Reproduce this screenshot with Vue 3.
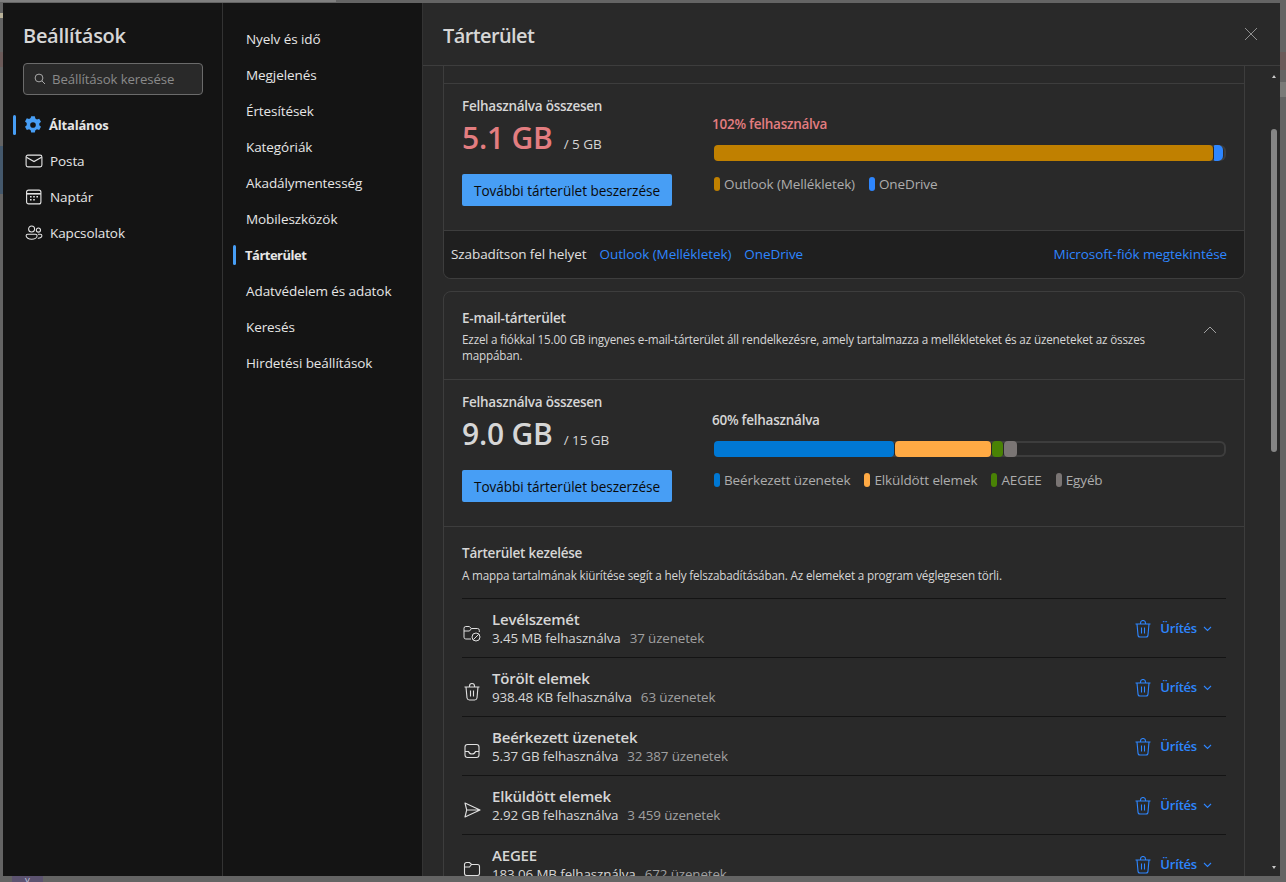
<script setup>
const generalNav = [
  { label: 'Általános', icon: 'gear', active: true },
  { label: 'Posta', icon: 'mail' },
  { label: 'Naptár', icon: 'cal' },
  { label: 'Kapcsolatok', icon: 'people' }
]
const subNav = ['Nyelv és idő', 'Megjelenés', 'Értesítések', 'Kategóriák', 'Akadálymentesség', 'Mobileszközök', 'Tárterület', 'Adatvédelem és adatok', 'Keresés', 'Hirdetési beállítások']
const mailLegend = [
  { label: 'Beérkezett üzenetek', color: '#0078d4' },
  { label: 'Elküldött elemek', color: '#ffaa44' },
  { label: 'AEGEE', color: '#498205' },
  { label: 'Egyéb', color: '#7a7574' }
]
const folders = [
  { name: 'Levélszemét', used: '3.45 MB felhasználva', count: '37 üzenetek', icon: 'junk' },
  { name: 'Törölt elemek', used: '938.48 KB felhasználva', count: '63 üzenetek', icon: 'trash' },
  { name: 'Beérkezett üzenetek', used: '5.37 GB felhasználva', count: '32 387 üzenetek', icon: 'inbox' },
  { name: 'Elküldött elemek', used: '2.92 GB felhasználva', count: '3 459 üzenetek', icon: 'send' },
  { name: 'AEGEE', used: '183.06 MB felhasználva', count: '672 üzenetek', icon: 'folder' }
]
</script>

<template>
  <div class="screen">
    <div class="backdrop-bits" aria-hidden="true">
      <i class="bit b0"></i><i class="bit b1"></i><i class="bit b2"></i><i class="bit b3"></i><i class="bit b5"></i><i class="bit b6"></i>
      <i class="bit b4">V</i>
    </div>
    <div class="modal">
      <aside class="pane-main">
        <h1 class="app-title">Beállítások</h1>
        <div class="search">
          <svg width="14" height="14" viewBox="0 0 14 14" fill="none" stroke="#a8a8a8" stroke-width="1"><circle cx="6" cy="6" r="3.9"/><path d="M8.9 8.9 12 12"/></svg>
          <span>Beállítások keresése</span>
        </div>
        <nav class="main-nav">
          <div v-for="n in generalNav" :key="n.label" class="main-item" :class="{ active: n.active }">
            <span class="ico">
              <svg v-if="n.icon === 'gear'" width="18" height="18" viewBox="1 1 16 16"><path fill="#479ef5" fill-rule="evenodd" d="M7.400 1.200h3.200l.5 2 1.400.8 2-.6 1.600 2.800-1.500 1.400v1.600l1.500 1.400-1.600 2.800-2-.6-1.400.8-.5 2H7.400l-.5-2-1.400-.8-2 .6-1.600-2.800 1.500-1.400V7.200L1.900 5.800 3.500 3l2 .6L6.900 2.800zM9 6.500a2.500 2.500 0 1 0 0 5 2.500 2.500 0 0 0 0-5z"/></svg>
              <svg v-else-if="n.icon === 'mail'" width="18" height="18" viewBox="0 0 18 18" fill="none" stroke="#e6e6e6" stroke-width="1.100"><rect x="1.100" y="3.100" width="15.800" height="11.800" rx="1.800"/><path d="M1.400 5.200 9 9.600l7.600-4.400"/></svg>
              <svg v-else-if="n.icon === 'cal'" width="18" height="18" viewBox="0 0 18 18" fill="none" stroke="#e6e6e6" stroke-width="1.100"><rect x="1.600" y="2.100" width="14.300" height="13.800" rx="2"/><path d="M1.600 5.800h14.300" stroke-width="1.600"/><path d="M5 8.700h1.600M8.200 8.700h1.600M11.400 8.700H13M5 11.800h1.600M8.200 11.800h1.600" stroke-width="1.400"/></svg>
              <svg v-else width="18" height="18" viewBox="0 0 18 18" fill="none" stroke="#e6e6e6" stroke-width="1.050"><circle cx="6.600" cy="5" r="3"/><circle cx="13.400" cy="6" r="2.100"/><path d="M1.100 11.800c0-1 .8-1.600 1.600-1.600h7.800c.8 0 1.600.6 1.600 1.600 0 2-2.600 3.400-5.500 3.400s-5.500-1.400-5.500-3.400z"/><path d="M13 10.200h2.400c.8 0 1.500.6 1.500 1.500 0 1.500-1.600 2.600-4.100 2.500"/></svg>
            </span>
            <span>{{ n.label }}</span>
          </div>
        </nav>
      </aside>

      <nav class="pane-sub">
        <div v-for="s in subNav" :key="s" class="sub-item" :class="{ active: s === 'Tárterület' }">{{ s }}</div>
      </nav>

      <main class="pane-content">
        <header class="head">
          <h2>Tárterület</h2>
          <svg width="14" height="14" viewBox="0 0 14 14" fill="none" stroke="#8f8f8f" stroke-width="1"><path d="M1 1l12 12M13 1 1 13"/></svg>
        </header>
        <div class="scroll">
          <section class="card card-clipped">
            <div class="clip-row"></div>
            <div class="usage usage-first">
              <div class="usage-left">
                <div class="u-label">Felhasználva összesen</div>
                <div class="u-total over"><b>5.1 GB</b><small>/ 5 GB</small></div>
                <button class="buy">További tárterület beszerzése</button>
              </div>
              <div class="usage-right">
                <div class="pct over">102% felhasználva</div>
                <div class="bar">
                  <span class="seg seg-outlook"></span>
                  <span class="seg seg-od"></span>
                </div>
                <div class="legend">
                  <span class="lg"><i class="dot dot-outlook"></i>Outlook (Mellékletek)</span>
                  <span class="lg"><i class="dot dot-od"></i>OneDrive</span>
                </div>
              </div>
            </div>
            <footer class="free">
              <span class="free-label">Szabadítson fel helyet</span>
              <a>Outlook (Mellékletek)</a>
              <a>OneDrive</a>
              <a class="ms">Microsoft-fiók megtekintése</a>
            </footer>
          </section>

          <section class="card">
            <div class="mail-head">
              <div class="mail-text">
                <div class="u-label">E-mail-tárterület</div>
                <p>Ezzel a fiókkal 15.00 GB ingyenes e-mail-tárterület áll rendelkezésre, amely tartalmazza a mellékleteket és az üzeneteket az összes mappában.</p>
              </div>
              <svg class="chev-up" width="14" height="14" viewBox="0 0 14 14" fill="none" stroke="#a0a0a0" stroke-width="1"><path d="M1 10l6-6 6 6"/></svg>
            </div>
            <div class="usage usage-mail">
              <div class="usage-left">
                <div class="u-label">Felhasználva összesen</div>
                <div class="u-total"><b>9.0 GB</b><small>/ 15 GB</small></div>
                <button class="buy">További tárterület beszerzése</button>
              </div>
              <div class="usage-right">
                <div class="pct">60% felhasználva</div>
                <div class="bar">
                  <span class="seg s1"></span>
                  <span class="seg s2"></span>
                  <span class="seg s3"></span>
                  <span class="seg s4"></span>
                </div>
                <div class="legend">
                  <span v-for="l in mailLegend" :key="l.label" class="lg"><i class="dot" :style="{ background: l.color }"></i>{{ l.label }}</span>
                </div>
              </div>
            </div>
            <div class="manage">
              <div class="u-label">Tárterület kezelése</div>
              <p>A mappa tartalmának kiürítése segít a hely felszabadításában. Az elemeket a program véglegesen törli.</p>
              <div class="folders">
                <div v-for="f in folders" :key="f.name" class="folder">
                  <span class="f-ico">
                    <svg v-if="f.icon === 'junk'" width="20" height="20" viewBox="0 0 20 20" fill="none" stroke="#e0e0e0" stroke-width="1"><path d="M9 16H3.800A1.800 1.800 0 0 1 2 14.200V5.300A1.800 1.800 0 0 1 3.800 3.500h3.400L9.300 5.500h6.200A1.800 1.800 0 0 1 17.300 7.300V9"/><path d="M2 8h5.500l2-2.500"/><circle cx="14" cy="14" r="4"/><path d="M11.300 16.700l5.400-5.400"/></svg>
                    <svg v-else-if="f.icon === 'trash'" width="20" height="20" viewBox="0 0 20 20" fill="none" stroke="#e0e0e0" stroke-width="1.100"><path d="M2.500 5h15M7.500 5V4a2.500 2.500 0 0 1 5 0v1M4 5l1 11a2.500 2.500 0 0 0 2.500 2h5a2.500 2.500 0 0 0 2.500-2l1-11M8.500 8.500v6M11.500 8.500v6"/></svg>
                    <svg v-else-if="f.icon === 'inbox'" width="20" height="20" viewBox="0 0 20 20" fill="none" stroke="#e0e0e0" stroke-width="1.100"><rect x="3" y="3.500" width="14" height="13" rx="2.500"/><path d="M3 10.500h3.500c.7 2 2 2.500 3.500 2.500s2.800-.5 3.500-2.500H17"/></svg>
                    <svg v-else-if="f.icon === 'send'" width="20" height="20" viewBox="0 0 20 20" fill="none" stroke="#e0e0e0" stroke-width="1.100" stroke-linejoin="round"><path d="M3 3l15 7-15 7 1.700-7zM4.700 10H18"/></svg>
                    <svg v-else width="20" height="20" viewBox="0 0 20 20" fill="none" stroke="#e0e0e0" stroke-width="1.100"><path d="M2.500 5.500A2 2 0 0 1 4.500 3.500h3l2 2h6a2 2 0 0 1 2 2v7a2 2 0 0 1-2 2h-11a2 2 0 0 1-2-2zM2.500 8h5l2-2.500"/></svg>
                  </span>
                  <div class="f-text">
                    <div class="f-name">{{ f.name }}</div>
                    <div class="f-meta"><span>{{ f.used }}</span><span class="f-count">{{ f.count }}</span></div>
                  </div>
                  <div class="empty">
                    <svg class="empty-bin" width="18" height="18" viewBox="0 0 18 18" fill="none" stroke="#2e86fe" stroke-width="1.100"><path d="M1.500 4h15M6.500 4V3a2.500 2.500 0 0 1 5 0v1M3 4l1 11a2 2 0 0 0 2 2h6a2 2 0 0 0 2-2l1-11M7.500 7.500v6M10.500 7.500v6"/></svg>
                    <span>Ürítés</span>
                    <svg width="9" height="9" viewBox="0 0 9 9" fill="none" stroke="#2e86fe" stroke-width="1.100"><path d="M1 3l3.500 3.500L8 3"/></svg>
                  </div>
                </div>
              </div>
            </div>
          </section>
        </div>
        <div class="sb" aria-hidden="true">
          <i class="sb-up"></i>
          <i class="sb-thumb"></i>
          <i class="sb-down"></i>
        </div>
      </main>
    </div>
  </div>
</template>

<style>
html, body { margin: 0; background: #6a6a6a; overflow: hidden; }
</style>

<style scoped>
* { box-sizing: border-box; }
.screen {
  position: relative;
  width: 1286px;
  height: 882px;
  padding: 3px 6px 6px 3px;
  background: #646464;
  font-family: "Open Sans", "Noto Sans", "Liberation Sans", sans-serif;
  font-size: 13.500px;
  color: #e6e6e6;
  overflow: hidden;
}
.backdrop-bits { position: absolute; inset: 0; }
.bit { position: absolute; display: block; }
.b0 { left: 0; top: 0; width: 336px; height: 2px; background: #7f7f7f; }
.b1 { left: 0; top: 52px; width: 3px; height: 15px; background: #6b5a59; }
.b2 { left: 0; top: 146px; width: 3px; height: 48px; background: #44586c; }
.b3 { left: 1280px; top: 52px; width: 6px; height: 18px; background: #6b5a59; }
.b5 { left: 1280px; top: 82px; width: 6px; height: 15px; background: #7a7a78; }
.b6 { left: 0; top: 13px; width: 3px; height: 5px; background: #b9b29a; }
.b4 {
  left: 12px;
  top: 876px;
  width: 31px;
  height: 6px;
  background: #5c5370;
  color: #cfd6e6;
  font-size: 8px;
  line-height: 7px;
  font-style: normal;
  text-align: center;
}
.modal {
  position: relative;
  display: flex;
  height: 873px;
  background: #141414;
}
.pane-main {
  width: 220px;
  flex: none;
  padding: 0 20px 0 20px;
  border-right: 1px solid #333;
}
.app-title {
  margin: 20px 0 0;
  font-size: 20px;
  line-height: 26px;
  font-weight: 600;
  color: #d6d6d6;
  letter-spacing: -0.3px;
  white-space: nowrap;
}
.search {
  margin-top: 14px;
  width: 180px;
  height: 32px;
  display: flex;
  align-items: center;
  gap: 5px;
  padding-left: 9px;
  background: #292929;
  border: 1px solid #6b6b6b;
  border-radius: 4px;
  color: #8a8a8a;
  font-size: 13.200px;
  letter-spacing: -0.1px;
  white-space: nowrap;
}
.main-nav { margin-top: 12px; margin-left: -7px; }
.main-item {
  position: relative;
  height: 36px;
  display: flex;
  align-items: center;
  gap: 7px;
  padding-left: 9px;
  letter-spacing: -0.1px;
}
.main-item.active { font-size: 13px; font-weight: 700; letter-spacing: -0.2px; padding-left: 8px; }
.main-item.active::before {
  content: "";
  position: absolute;
  left: -3px;
  top: 8px;
  width: 3px;
  height: 20px;
  border-radius: 2px;
  background: #479ef5;
}
.ico { width: 18px; height: 18px; display: flex; }
.pane-sub {
  width: 200px;
  flex: none;
  padding-top: 18px;
  border-right: 1px solid #333;
}
.sub-item {
  position: relative;
  height: 36px;
  display: flex;
  align-items: center;
  padding-left: 23px;
  letter-spacing: -0.08px;
  white-space: nowrap;
}
.sub-item.active { font-size: 13px; font-weight: 700; padding-left: 22px; letter-spacing: -0.5px; }
.sub-item.active::before {
  content: "";
  position: absolute;
  left: 10px;
  top: 8px;
  width: 3px;
  height: 20px;
  border-radius: 2px;
  background: #479ef5;
}
.pane-content {
  position: relative;
  flex: 1;
  min-width: 0;
  display: flex;
  flex-direction: column;
  background: #292929;
}
.head {
  height: 63px;
  flex: none;
  display: flex;
  align-items: center;
  justify-content: space-between;
  padding: 0 22px 0 20px;
  border-bottom: 1px solid #3d3d3d;
}
.head h2 {
  margin: 2px 0 0;
  font-size: 20px;
  font-weight: 600;
  color: #d6d6d6;
  letter-spacing: -0.6px;
}
.scroll {
  flex: 1;
  min-height: 0;
  overflow: hidden;
  padding: 0 35px 0 20px;
}
.card {
  border: 1px solid #3d3d3d;
  border-radius: 8px;
  margin-bottom: 12px;
}
.card-clipped {
  border-top: 0;
  border-radius: 0 0 8px 8px;
  overflow: hidden;
}
.clip-row { height: 18px; border-bottom: 1px solid #3d3d3d; }
.usage {
  display: flex;
  padding: 13px 18px 0;
}
.usage-first { height: 146px; }
.usage-mail { height: 147px; border-top: 1px solid #3d3d3d; }
.usage-left { width: 252px; flex: none; }
.u-label {
  font-size: 13.500px;
  line-height: 18px;
  font-weight: 600;
  color: #d6d6d6;
  letter-spacing: -0.25px;
  white-space: nowrap;
}
.u-total { display: flex; align-items: baseline; height: 46px; line-height: 46px; color: #d6d6d6; white-space: nowrap; }
.u-total b { font-size: 30px; font-weight: 600; letter-spacing: -0.2px; }
.u-total small { font-size: 13.500px; margin-left: 11px; letter-spacing: -0.05px; }
.u-total.over { color: #e37d80; }
.u-total.over small { color: #d6d6d6; }
.buy {
  display: block;
  margin-top: 13px;
  width: 210px;
  height: 32px;
  border: 0;
  border-radius: 2px;
  background: #479ef5;
  color: #0a0a0a;
  font: inherit;
  font-size: 13.600px;
  letter-spacing: -0.05px;
  padding: 0;
}
.usage-right { flex: 1; padding-top: 18px; }
.pct {
  font-size: 13.500px;
  line-height: 18px;
  font-weight: 600;
  color: #d6d6d6;
  margin-left: -2px;
  letter-spacing: -0.25px;
}
.pct.over { color: #e37d80; }
.bar {
  display: flex;
  margin-top: 12px;
  height: 16px;
  width: 512px;
  gap: 1px;
  border-radius: 6px;
  box-shadow: inset 0 0 0 2px #3d3d3d;
}
.seg { display: block; height: 16px; border-radius: 4px; flex: none; }
.seg-outlook { width: 499px; background: #c08000; }
.seg-od { width: 9px; background: #2e86fe; border-radius: 1px 5px 5px 1px; }
.s1 { width: 180px; background: #0078d4; }
.s2 { width: 96px; background: #ffaa44; }
.s3 { width: 11px; background: #498205; }
.s4 { width: 13px; background: #7a7574; }
.legend {
  display: flex;
  gap: 14px;
  margin-top: 14px;
  color: #adadad;
  line-height: 18px;
  letter-spacing: -0.12px;
  white-space: nowrap;
}
.lg { display: flex; align-items: center; gap: 4px; }
.dot { display: block; width: 6px; height: 14px; border-radius: 3px; }
.dot-outlook { background: #c08000; }
.dot-od { background: #2e86fe; }
.free {
  height: 48px;
  display: flex;
  align-items: center;
  padding: 0 17px 2px 7px;
  background: #1f1f1f;
  border-top: 1px solid #3d3d3d;
  white-space: nowrap;
  letter-spacing: -0.08px;
}
.free-label { margin-right: 13px; color: #e0e0e0; }
.free a { color: #2e86fe; margin-right: 13px; }
.free a.ms { margin: 0 0 0 auto; }
.mail-head {
  height: 87px;
  display: flex;
  justify-content: space-between;
  align-items: center;
  padding: 0 27px 0 18px;
}
.mail-text { width: 700px; }
.mail-text p, .manage p {
  margin: 4px 0 0;
  font-size: 11.700px;
  line-height: 16px;
  color: #d6d6d6;
  letter-spacing: -0.165px;
}
.chev-up { flex: none; margin-top: -12px; }
.manage { padding: 17px 18px 0; border-top: 1px solid #3d3d3d; }
.manage p { margin-top: 5px; white-space: nowrap; }
.folders { margin-top: 15px; }
.folder {
  display: flex;
  align-items: center;
  height: 59px;
  border-top: 1px solid #141414;
}
.f-ico { width: 30px; flex: none; display: flex; padding-top: 9px; }
.f-text { flex: 1; min-width: 0; padding-bottom: 1px; }
.f-name {
  font-size: 15px;
  line-height: 20px;
  font-weight: 600;
  color: #d6d6d6;
  letter-spacing: -0.2px;
}
.f-meta { margin-top: 1px; line-height: 17px; font-size: 13.400px; color: #d6d6d6; letter-spacing: -0.12px; white-space: nowrap; }
.f-count { margin-left: 9px; color: #a0a0a0; }
.empty {
  display: flex;
  align-items: center;
  gap: 6px;
  padding-right: 14px;
  color: #2e86fe;
  font-size: 13px;
  font-weight: 600;
  letter-spacing: -0.2px;
}
.empty-bin { margin-right: 2px; margin-top: 2px; }
.sb {
  position: absolute;
  right: 0;
  top: 63px;
  bottom: 0;
  width: 11px;
}
.sb-thumb {
  position: absolute;
  left: 2px;
  top: 63px;
  width: 6px;
  height: 323px;
  border-radius: 3px;
  background: #858585;
}
.sb-up, .sb-down { position: absolute; left: 3px; width: 0; height: 0; border-left: 2px solid transparent; border-right: 2px solid transparent; }
.sb-up { top: 9px; border-bottom: 3px solid #c8c8c8; }
.sb-down { bottom: 7px; border-top: 3px solid #c8c8c8; }
</style>
